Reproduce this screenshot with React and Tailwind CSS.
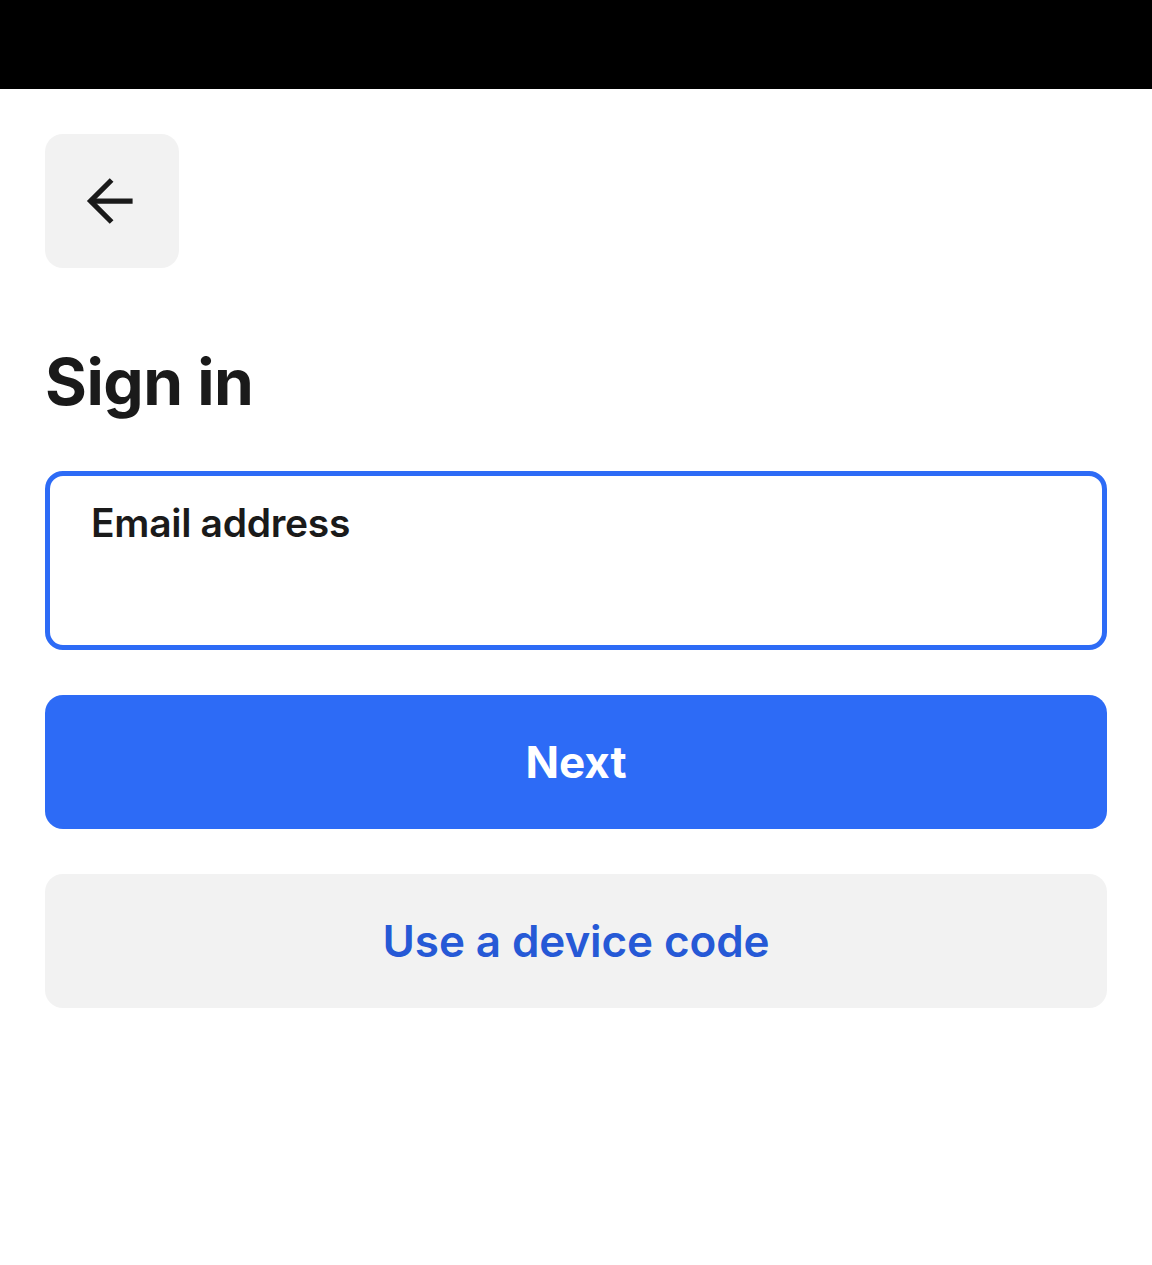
import React from "react";

export default function App() {
  return (
    <div className="min-h-[1265px] bg-white" style={{ fontFamily: "Inter, 'Noto Sans', sans-serif" }}>
      <div className="h-[89px] bg-black" />
      <div className="px-[45px] pt-[45px]">
        <button className="flex h-[134px] w-[134px] items-center justify-center rounded-[18px] bg-[#f2f2f2]">
          <svg width="72" height="72" viewBox="0 0 24 24" fill="none" stroke="#1a1a1a" strokeWidth="1.75" strokeLinecap="butt" strokeLinejoin="miter" className="-ml-[3px]">
            <path d="M12.2 19 5.2 12l7-7" />
            <path d="M19.2 12H5.8" />
          </svg>
        </button>
        <h1 className="mt-[75px] text-[64px] font-bold leading-[77px] tracking-[-0.5px] text-[#1a1a1a]">Sign in</h1>
        <div className="mt-[51px] h-[179px] rounded-[18px] border-[5px] border-[#2d6bf6] px-[41px] pt-[19px]">
          <label className="block text-[39px] font-semibold leading-[56px] tracking-[-0.3px] text-[#1a1a1a]">Email address</label>
        </div>
        <button className="mt-[45px] flex h-[134px] w-full items-center justify-center rounded-[18px] bg-[#2d6bf6] text-[44px] font-bold text-white">
          Next
        </button>
        <button className="mt-[45px] flex h-[134px] w-full items-center justify-center rounded-[18px] bg-[#f2f2f2] text-[44px] font-semibold tracking-[-0.1px] text-[#2659d6]">
          Use a device code
        </button>
      </div>
    </div>
  );
}
